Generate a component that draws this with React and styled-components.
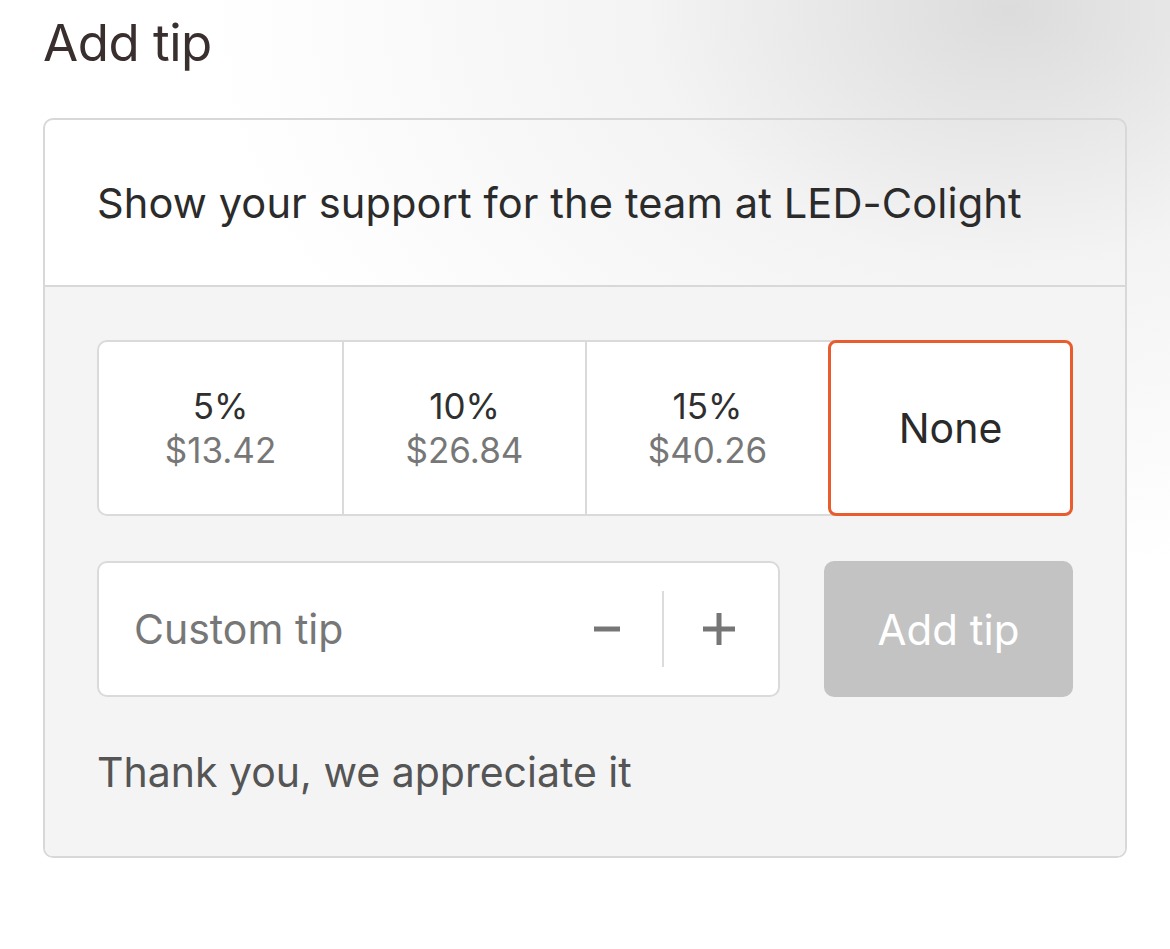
import React, {useState} from "react";
import styled, {createGlobalStyle} from "styled-components";

const GlobalStyle = createGlobalStyle`
    html, body {
        margin: 0;
        padding: 0;
    }
    body {
        font-family: Inter, "Liberation Sans", Arial, sans-serif;
        background: #ffffff;
    }
`;

const Page = styled.div`
    width: 1170px;
    height: 949px;
    box-sizing: border-box;
    padding: 0 43px;
    background:
        radial-gradient(ellipse 800px 560px at 1010px 10px, rgba(218, 218, 218, 0.95), rgba(234, 234, 234, 0.55) 45%, rgba(255, 255, 255, 0) 100%),
        #ffffff;
    overflow: hidden;
`;

const Title = styled.h1`
    margin: 0;
    padding: 12px 0 0 0;
    height: 118px;
    box-sizing: border-box;
    font-size: 51px;
    font-weight: 400;
    letter-spacing: -0.5px;
    color: #3a2f2f;
`;

const Card = styled.div`
    width: 1084px;
    box-sizing: border-box;
    border: 2px solid #d8d8d8;
    border-radius: 10px;
    overflow: hidden;
`;

const CardHeader = styled.div`
    height: 165px;
    display: flex;
    align-items: center;
    padding: 0 52px;
    border-bottom: 2px solid #d8d8d8;
    font-size: 41.6px;
    letter-spacing: 0.1px;
    color: #2b2b2b;
`;

const CardBody = styled.div`
    background: #f4f4f4;
    padding: 53px 52px 0;
    height: 569px;
    box-sizing: border-box;
`;

const TipRow = styled.div`
    display: grid;
    grid-template-columns: repeat(4, 1fr);
    height: 176px;
    border: 2px solid #dadada;
    border-radius: 10px;
    background: #ffffff;
    box-sizing: border-box;
`;

const TipOption = styled.button`
    display: flex;
    flex-direction: column;
    align-items: center;
    justify-content: center;
    border: none;
    border-left: ${p => (p.$first ? "none" : "2px solid #dadada")};
    background: transparent;
    font-family: inherit;
    padding: 0;
    cursor: pointer;
    ${p =>
        p.$active &&
        `
        margin: -2px -2px -2px 0;
        border: 3px solid #e85c2e;
        border-radius: 8px;
        background: #ffffff;
    `}
`;

const Percent = styled.span`
    font-size: 35px;
    line-height: 44px;
    color: #2f2f2f;
`;

const Amount = styled.span`
    font-size: 35px;
    line-height: 44px;
    color: #777777;
`;

const NoneLabel = styled.span`
    font-size: 41px;
    color: #2a2a2a;
`;

const CustomRow = styled.div`
    display: flex;
    gap: 44px;
    margin-top: 45px;
    height: 136px;
`;

const CustomInput = styled.div`
    flex: 0 0 683px;
    display: flex;
    align-items: center;
    box-sizing: border-box;
    border: 2px solid #dadada;
    border-radius: 10px;
    background: #ffffff;
    padding: 0 42px 0 35px;
`;

const Placeholder = styled.span`
    flex: 1;
    font-size: 41px;
    color: #777777;
`;

const Stepper = styled.button`
    display: flex;
    align-items: center;
    justify-content: center;
    width: 34px;
    height: 34px;
    border: none;
    background: transparent;
    padding: 0;
    color: #767676;
    cursor: pointer;
`;

const StepDivider = styled.div`
    width: 2px;
    height: 76px;
    background: #dcdcdc;
    margin: 0 38px;
`;

const AddButton = styled.button`
    flex: 1;
    border: none;
    border-radius: 10px;
    background: #c3c3c3;
    color: #ffffff;
    font-family: inherit;
    font-size: 42px;
`;

const ThankYou = styled.p`
    margin: 50px 0 0;
    font-size: 41px;
    color: #555555;
`;

const tips = [
    {id: "5", label: "5%", amount: "$13.42"},
    {id: "10", label: "10%", amount: "$26.84"},
    {id: "15", label: "15%", amount: "$40.26"},
];

const App = () => {
    const [selected, setSelected] = useState("none");

    return (
        <Page>
            <GlobalStyle />
            <Title>Add tip</Title>
            <Card>
                <CardHeader>Show your support for the team at LED-Colight</CardHeader>
                <CardBody>
                    <TipRow>
                        {tips.map((tip, i) => (
                            <TipOption
                                key={tip.id}
                                $first={i === 0}
                                $active={selected === tip.id}
                                onClick={() => setSelected(tip.id)}
                            >
                                <Percent>{tip.label}</Percent>
                                <Amount>{tip.amount}</Amount>
                            </TipOption>
                        ))}
                        <TipOption
                            $active={selected === "none"}
                            onClick={() => setSelected("none")}
                        >
                            <NoneLabel>None</NoneLabel>
                        </TipOption>
                    </TipRow>
                    <CustomRow>
                        <CustomInput>
                            <Placeholder>Custom tip</Placeholder>
                            <Stepper aria-label="decrease">
                                <svg width="28" height="28" viewBox="0 0 28 28">
                                    <path d="M1 14h26" stroke="currentColor" strokeWidth="5" />
                                </svg>
                            </Stepper>
                            <StepDivider />
                            <Stepper aria-label="increase">
                                <svg width="32" height="32" viewBox="0 0 32 32">
                                    <path d="M0 16h32M16 0v32" stroke="currentColor" strokeWidth="5" />
                                </svg>
                            </Stepper>
                        </CustomInput>
                        <AddButton>Add tip</AddButton>
                    </CustomRow>
                    <ThankYou>Thank you, we appreciate it</ThankYou>
                </CardBody>
            </Card>
        </Page>
    );
};

export default App;
